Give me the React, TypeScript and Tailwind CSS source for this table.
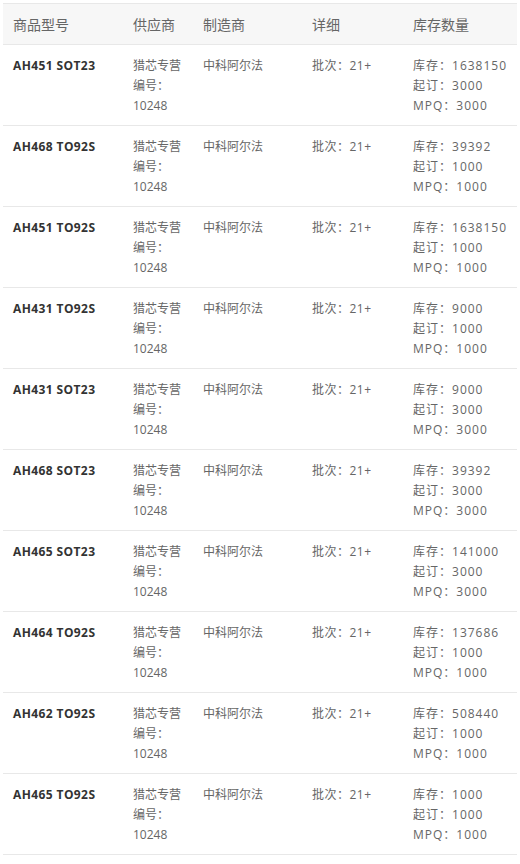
import React from "react";

type Row = { model: string; stock: string; moq: string; mpq: string };

const rows: Row[] = [
  { model: "AH451 SOT23", stock: "1638150", moq: "3000", mpq: "3000" },
  { model: "AH468 TO92S", stock: "39392", moq: "1000", mpq: "1000" },
  { model: "AH451 TO92S", stock: "1638150", moq: "1000", mpq: "1000" },
  { model: "AH431 TO92S", stock: "9000", moq: "1000", mpq: "1000" },
  { model: "AH431 SOT23", stock: "9000", moq: "3000", mpq: "3000" },
  { model: "AH468 SOT23", stock: "39392", moq: "3000", mpq: "3000" },
  { model: "AH465 SOT23", stock: "141000", moq: "3000", mpq: "3000" },
  { model: "AH464 TO92S", stock: "137686", moq: "1000", mpq: "1000" },
  { model: "AH462 TO92S", stock: "508440", moq: "1000", mpq: "1000" },
  { model: "AH465 TO92S", stock: "1000", moq: "1000", mpq: "1000" },
];

const font = "font-['Open_Sans','Noto_Sans_CJK_SC',sans-serif]";

export default function App() {
  return (
    <div className={`w-[520px] bg-white px-[3px] pt-[3px] ${font}`}>
      <table className="w-full border-collapse table-fixed">
        <colgroup>
          <col className="w-[120px]" />
          <col className="w-[70px]" />
          <col className="w-[109px]" />
          <col className="w-[101px]" />
          <col />
        </colgroup>
        <thead>
          <tr className="h-[41px] bg-[#f7f7f7] border-y border-[#e8e8e8] text-left text-[14px] text-[#666]">
            <th className="pl-[10px] font-normal">商品型号</th>
            <th className="pl-[10px] font-normal">供应商</th>
            <th className="pl-[10px] font-normal">制造商</th>
            <th className="pl-[10px] font-normal">详细</th>
            <th className="pl-[10px] font-normal">库存数量</th>
          </tr>
        </thead>
        <tbody className="text-[12px] leading-[20px] text-[#666]">
          {rows.map((r, i) => (
            <tr key={i} className="border-b border-[#e8e8e8] align-top">
              <td className="pl-[10px] pt-[11px] pb-[9px] font-bold text-[#333] tracking-[0.4px]">{r.model}</td>
              <td className="pl-[10px] pt-[11px] pb-[9px]">
                <div>猎芯专营</div>
                <div>编号：</div>
                <div>10248</div>
              </td>
              <td className="pl-[10px] pt-[11px] pb-[9px]">中科阿尔法</td>
              <td className="pl-[10px] pt-[11px] pb-[9px] tracking-[0.5px]">批次：21+</td>
              <td className="pl-[10px] pt-[11px] pb-[9px] tracking-[1px]">
                <div>库存：{r.stock}</div>
                <div>起订：{r.moq}</div>
                <div>MPQ：{r.mpq}</div>
              </td>
            </tr>
          ))}
        </tbody>
      </table>
    </div>
  );
}
